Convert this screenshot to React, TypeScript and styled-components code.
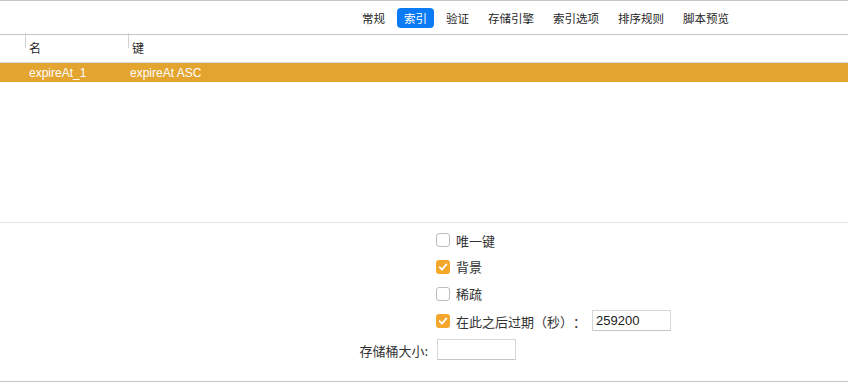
import React, { useState } from "react";
import styled, { createGlobalStyle } from "styled-components";

const GlobalStyle = createGlobalStyle`
    html, body {
        margin: 0;
        padding: 0;
        background: #fff;
    }
    body {
        font-family: "Liberation Sans", "Noto Sans CJK SC", sans-serif;
        color: #262626;
        text-spacing-trim: space-all;
    }
`;

const Window = styled.div`
    width: 848px;
    height: 383px;
    display: flex;
    flex-direction: column;
    background: #fff;
    overflow: hidden;
`;

const TabBar = styled.div`
    height: 33px;
    border-top: 1px solid #c6c6c6;
    border-bottom: 1px solid #c6c6c6;
    display: flex;
    align-items: center;
    justify-content: flex-end;
    padding-right: 112px;
    gap: 5px;
`;

const Tab = styled.button<{ $active?: boolean }>`
    height: 20px;
    padding: 0 7px;
    border: none;
    border-radius: 4px;
    font-family: "Noto Sans CJK SC", sans-serif;
    font-size: 11.5px;
    line-height: 20px;
    background: ${({ $active }) => ($active ? "#0a7bf4" : "transparent")};
    color: ${({ $active }) => ($active ? "#fff" : "#262626")};
    cursor: default;
`;

const Table = styled.div`
    height: 187px;
    border-bottom: 1px solid #e1e1e1;
`;

const Row = styled.div<{ $header?: boolean; $selected?: boolean }>`
    display: grid;
    grid-template-columns: 25px 103px 1fr;
    align-items: center;
    height: ${({ $header }) => ($header ? "27px" : "19px")};
    border-bottom: ${({ $header }) => ($header ? "1px solid #dcdcdc" : "none")};
    background: ${({ $selected }) => ($selected ? "#e3a430" : "transparent")};
    color: ${({ $selected }) => ($selected ? "#fff" : "#262626")};
    font-size: 12px;
`;

const Cell = styled.div<{ $divider?: boolean; $pad?: number }>`
    position: relative;
    padding-left: ${({ $pad }) => $pad ?? 4}px;
    white-space: nowrap;
    ${({ $divider }) =>
        $divider &&
        `&::before {
            content: "";
            position: absolute;
            left: 0;
            top: -7px;
            height: 15px;
            width: 1px;
            background: #d2d2d2;
        }`}
`;

const HeaderText = styled.span`
    font-family: "Noto Sans CJK SC", sans-serif;
    font-size: 12px;
    position: relative;
    top: -1px;
`;

const Form = styled.div`
    flex: 1;
    border-bottom: 1px solid #c6c6c6;
    padding-top: 4px;
    display: flex;
    flex-direction: column;
    margin-bottom: 1px;
`;

const FormRow = styled.div<{ $h: number }>`
    display: grid;
    grid-template-columns: 428px 1fr;
    column-gap: 8px;
    align-items: center;
    height: ${({ $h }) => $h}px;
`;

const FieldLabel = styled.label`
    text-align: right;
    font-family: "Noto Sans CJK SC", sans-serif;
    font-size: 13px;
    color: #333;
`;

const Control = styled.div`
    display: flex;
    align-items: center;
`;

const CheckLabel = styled.label`
    display: flex;
    align-items: center;
    gap: 6px;
    font-family: "Noto Sans CJK SC", sans-serif;
    font-size: 13px;
    color: #333;
    cursor: default;
    text-spacing-trim: space-all;
`;

const Box = styled.span<{ $checked: boolean }>`
    width: 14px;
    height: 14px;
    box-sizing: border-box;
    border-radius: 3px;
    display: inline-flex;
    align-items: center;
    justify-content: center;
    background: ${({ $checked }) => ($checked ? "#f4a72a" : "#fff")};
    border: ${({ $checked }) => ($checked ? "none" : "1px solid #bdbdbd")};
`;

const TextInput = styled.input<{ $offset?: number }>`
    width: 79px;
    height: 21px;
    box-sizing: border-box;
    border: 1px solid #d6d6d6;
    border-bottom-color: #c6c6c6;
    padding: 0 3px;
    font-family: "Liberation Sans", sans-serif;
    font-size: 13px;
    color: #222;
    outline: none;
    margin-left: ${({ $offset }) => $offset ?? 0}px;
    position: relative;
    top: -1px;
`;

const Checkbox: React.FC<{ checked: boolean; label: string; onToggle: () => void }> = ({ checked, label, onToggle }) => (
    <CheckLabel onClick={onToggle}>
        <Box $checked={checked}>
            {checked && (
                <svg width="10" height="10" viewBox="0 0 10 10">
                    <path d="M1.6 5.2 L4 7.6 L8.4 2.4" fill="none" stroke="#fff" strokeWidth="1.8" strokeLinecap="round" strokeLinejoin="round" />
                </svg>
            )}
        </Box>
        {label}
    </CheckLabel>
);

const tabs = ["常规", "索引", "验证", "存储引擎", "索引选项", "排序规则", "脚本预览"];

export default function App() {
    const [active, setActive] = useState(1);
    const [flags, setFlags] = useState({ unique: false, background: true, sparse: false, expire: true });
    const toggle = (k: keyof typeof flags) => setFlags({ ...flags, [k]: !flags[k] });

    return (
        <Window>
            <GlobalStyle />
            <TabBar>
                {tabs.map((t, i) => (
                    <Tab key={t} $active={i === active} onClick={() => setActive(i)}>{t}</Tab>
                ))}
            </TabBar>

            <Table>
                <Row $header>
                    <Cell />
                    <Cell $divider><HeaderText>名</HeaderText></Cell>
                    <Cell $divider><HeaderText>键</HeaderText></Cell>
                </Row>
                <Row $selected>
                    <Cell />
                    <Cell>expireAt_1</Cell>
                    <Cell $pad={2}>expireAt ASC</Cell>
                </Row>
            </Table>

            <Form>
                <FormRow $h={26}>
                    <span />
                    <Control><Checkbox checked={flags.unique} label="唯一键" onToggle={() => toggle("unique")} /></Control>
                </FormRow>
                <FormRow $h={27}>
                    <span />
                    <Control><Checkbox checked={flags.background} label="背景" onToggle={() => toggle("background")} /></Control>
                </FormRow>
                <FormRow $h={27}>
                    <span />
                    <Control><Checkbox checked={flags.sparse} label="稀疏" onToggle={() => toggle("sparse")} /></Control>
                </FormRow>
                <FormRow $h={28}>
                    <span />
                    <Control>
                        <Checkbox checked={flags.expire} label="在此之后过期（秒）：" onToggle={() => toggle("expire")} />
                        <TextInput $offset={6} defaultValue="259200" />
                    </Control>
                </FormRow>
                <FormRow $h={30}>
                    <FieldLabel>存储桶大小:</FieldLabel>
                    <Control><TextInput $offset={1} /></Control>
                </FormRow>
            </Form>
        </Window>
    );
}
